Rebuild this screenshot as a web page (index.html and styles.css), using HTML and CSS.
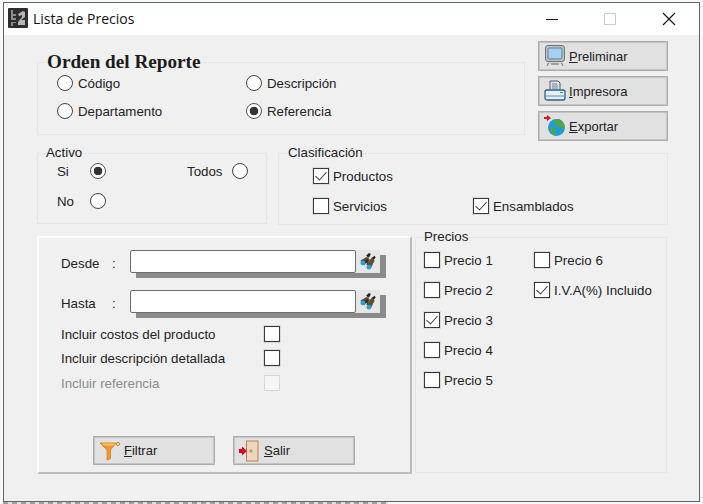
FILE: index.html
```html
<!DOCTYPE html>
<html lang="es">
<head>
    <meta charset="UTF-8">
    <meta name="viewport" content="width=device-width, initial-scale=1.0">
    <title>Lista de Precios</title>
    <link rel="stylesheet" href="styles.css">
</head>
<body>
    <div class="window">
        <div class="titlebar">
            <svg class="app-icon" viewBox="0 0 20 20">
                <rect width="20" height="20" rx="1" fill="#2e2e2e"/>
                <path d="M3 2h2v4h3v2H5v2h3v2H3zM3 14h5v1H5v3H3z" fill="#8c8c8c"/>
                <path d="M10 6l5-3 2 1v5l-4 3h4v5h-7v-3l4-5V7l-3 1z" fill="#b5b5b5"/>
            </svg>
            <span class="title">Lista de Precios</span>
            <div class="window-controls">
                <svg viewBox="0 0 46 32"><path d="M17 16.500h12" stroke="#111" stroke-width="1" fill="none"/></svg>
                <svg viewBox="0 0 46 32"><rect x="17.500" y="10.500" width="11" height="11" stroke="#ccc" fill="none"/></svg>
                <svg viewBox="0 0 46 32"><path d="M17 10l12 12M29 10L17 22" stroke="#111" stroke-width="1.100" fill="none"/></svg>
            </div>
        </div>

        <div class="content">
            <div class="row row-top">
                <fieldset class="group group-orden">
                    <legend class="legend-big">Orden del Reporte</legend>
                    <div class="orden-grid">
                        <label class="opt"><span class="radio"></span>Código</label>
                        <label class="opt"><span class="radio"></span>Descripción</label>
                        <label class="opt"><span class="radio"></span>Departamento</label>
                        <label class="opt"><span class="radio on"></span>Referencia</label>
                    </div>
                </fieldset>
                <div class="side-buttons">
                    <button class="btn" type="button">
                        <svg class="icon" viewBox="0 0 22 22">
                            <rect x="1.500" y="0.500" width="19" height="16" rx="2.500" fill="#bfc3c6" stroke="#6f7478"/>
                            <rect x="4" y="3" width="14" height="11" rx="1" fill="#a6d0f2" stroke="#5f7d96"/>
                            <path d="M3 17h16v2H3z" fill="#d4d4d4"/>
                            <path d="M4.500 18l-1.500 3M17.500 18l1.500 3M7 19h8" stroke="#6a6a6a" fill="none"/>
                        </svg>
                        <span><u>P</u>reliminar</span>
                    </button>
                    <button class="btn" type="button">
                        <svg class="icon" viewBox="0 0 22 22">
                            <path d="M6 1h8l2 2v8H6z" fill="#dfe3e7" stroke="#4f6172"/>
                            <path d="M8 4h5M8 6h6M8 8h6" stroke="#6f8296"/>
                            <rect x="1" y="10" width="20" height="10" rx="2" fill="#e6eef4" stroke="#2c5f8e" stroke-width="1.300"/>
                            <path d="M2 16h18" stroke="#5f8db8"/>
                            <path d="M16 12.500h3" stroke="#2bb35a" stroke-width="1.300"/>
                        </svg>
                        <span><u>I</u>mpresora</span>
                    </button>
                    <button class="btn" type="button">
                        <svg class="icon" viewBox="0 0 22 22">
                            <circle cx="12.500" cy="12.500" r="8.500" fill="#1f9be0"/>
                            <path d="M10 5l5-1 3 2 3 5-2 4-4-3-3-1-2-3zM5 12l5 1 2 3-1 5-3-2z" fill="#4fa44f"/>
                            <path d="M0 2h3V0l4 3-4 3V4H0z" fill="#e01020"/>
                        </svg>
                        <span><u>E</u>xportar</span>
                    </button>
                </div>
            </div>

            <div class="row row-mid">
                <fieldset class="group group-activo">
                    <legend>Activo</legend>
                    <div class="activo-grid">
                        <span>Si</span><span class="radio on"></span>
                        <span class="todos">Todos</span><span class="radio"></span>
                        <span>No</span><span class="radio"></span>
                    </div>
                </fieldset>
                <fieldset class="group group-clasif">
                    <legend>Clasificación</legend>
                    <div class="clasif-grid">
                        <label class="opt"><span class="check on"></span>Productos</label>
                        <span></span>
                        <label class="opt"><span class="check"></span>Servicios</label>
                        <label class="opt"><span class="check on"></span>Ensamblados</label>
                    </div>
                </fieldset>
            </div>

            <div class="row row-bottom">
                <div class="panel">
                    <div class="search-row">
                        <span class="search-label">Desde</span><span class="colon">:</span>
                        <div class="search-box">
                            <input class="search-input" type="text">
                            <button class="search-btn" type="button">
                                <svg viewBox="0 0 20 20"><use href="#binoculars"/></svg>
                            </button>
                        </div>
                    </div>
                    <div class="search-row">
                        <span class="search-label">Hasta</span><span class="colon">:</span>
                        <div class="search-box">
                            <input class="search-input" type="text">
                            <button class="search-btn" type="button">
                                <svg viewBox="0 0 20 20"><use href="#binoculars"/></svg>
                            </button>
                        </div>
                    </div>
                    <div class="include-list">
                        <label class="include"><span>Incluir costos del producto</span><span class="check"></span></label>
                        <label class="include"><span>Incluir descripción detallada</span><span class="check"></span></label>
                        <label class="include disabled"><span>Incluir referencia</span><span class="check"></span></label>
                    </div>
                    <div class="panel-buttons">
                        <button class="btn" type="button">
                            <svg class="icon" viewBox="0 0 22 22">
                                <path d="M1 3h16l-5.500 7v8.500l-3.500 1.500v-10z" fill="#f5962a" stroke="#d07c1e" stroke-width=".8"/>
                                <path d="M3 3.500h13l-2 2H5z" fill="#fbc06a"/>
                                <circle cx="19" cy="4" r="1.600" fill="none" stroke="#d07c1e"/>
                            </svg>
                            <span><u>F</u>iltrar</span>
                        </button>
                        <button class="btn" type="button">
                            <svg class="icon" viewBox="0 0 22 22">
                                <rect x="7.500" y="1" width="11.500" height="20" fill="#ecd6bd" stroke="#b9814f"/>
                                <path d="M10 11h4M12 9v4" stroke="#a97a50" stroke-width=".8"/>
                                <path d="M0 9h3V6.500L8 11l-5 4.500V13H0z" fill="#e2001a"/>
                            </svg>
                            <span><u>S</u>alir</span>
                        </button>
                    </div>
                </div>
                <fieldset class="group group-precios">
                    <legend>Precios</legend>
                    <div class="precios-grid">
                        <label class="opt"><span class="check"></span>Precio 1</label>
                        <label class="opt"><span class="check"></span>Precio 6</label>
                        <label class="opt"><span class="check"></span>Precio 2</label>
                        <label class="opt"><span class="check on"></span>I.V.A(%) Incluido</label>
                        <label class="opt"><span class="check on"></span>Precio 3</label>
                        <span></span>
                        <label class="opt"><span class="check"></span>Precio 4</label>
                        <span></span>
                        <label class="opt"><span class="check"></span>Precio 5</label>
                    </div>
                </fieldset>
            </div>
        </div>
    </div>
    <div class="behind"></div>

    <svg class="defs" width="0" height="0">
        <symbol id="binoculars" viewBox="0 0 20 20">
            <path d="M8 4l3-3 2 1-2 4zM14 6l3-2 1 2-3 3z" fill="#222"/>
            <path d="M2 9l7-4 3 3-6 6zM8 13l6-7 3 3-4 8z" fill="#5d4e36"/>
            <path d="M9 7l2 2-2 3-2-2z" fill="#2b2b2b"/>
            <circle cx="4.500" cy="11.500" r="2.500" fill="#25a0d8"/>
            <circle cx="11" cy="16" r="2.500" fill="#25a0d8"/>
        </symbol>
    </svg>
</body>
</html>
```

FILE: styles.css
```css
html, body {
    height: 100%;
}

body {
    margin: 0;
    padding: 2px 0 0 3px;
    box-sizing: border-box;
    overflow: hidden;
    background-color: #f7f8f8;
    font-family: "Liberation Sans", Arial, sans-serif;
    font-size: 13.3px;
    color: #222;
}

.window {
    width: 697px;
    height: 500px;
    box-sizing: border-box;
    border: 1px solid #5f6468;
    background-color: #f0f0f0;
}

.behind {
    width: 385px;
    height: 2px;
    background: repeating-linear-gradient(90deg, #9aa1a5 0 5px, #dfe2e4 5px 9px);
}

.titlebar {
    height: 32px;
    display: flex;
    align-items: center;
    background-color: #fff;
    padding-left: 4px;
}

.app-icon {
    width: 20px;
    height: 20px;
    margin: 0 5px 2px 0;
}

.title {
    font-family: "Open Sans", sans-serif;
    font-size: 14px;
    color: #111;
    margin-bottom: 2px;
}

.window-controls {
    margin-left: auto;
    display: flex;
    margin-right: 7px;
}

.window-controls svg {
    width: 46px;
    height: 32px;
    margin-left: 12px;
}

.window-controls svg:last-child {
    margin-left: 13px;
}

.content {
    padding: 6px 0 0 33px;
    display: flex;
    flex-direction: column;
    gap: 5px;
}

.row {
    display: flex;
    align-items: flex-start;
}

.group {
    margin: 0;
    min-width: 0;
    box-sizing: border-box;
    border: 1px solid #e6e6e6;
    padding: 0 0 0 9px;
}

.group legend {
    padding: 0;
    line-height: 16px;
    font-size: 13.3px;
}

.group .legend-big {
    font-family: "Liberation Serif", serif;
    font-weight: bold;
    font-size: 19.2px;
    line-height: 20px;
    color: #1b1b1b;
}

.opt {
    display: flex;
    align-items: center;
    gap: 4px;
    white-space: nowrap;
}

.radio {
    flex: none;
    width: 16px;
    height: 16px;
    box-sizing: border-box;
    border: 1px solid #444;
    border-radius: 50%;
    background-color: #fff;
    display: inline-block;
}

.radio.on {
    border-color: #555;
    background: radial-gradient(circle, #333 0 4px, #fff 4.600px);
}

.check {
    flex: none;
    width: 16px;
    height: 16px;
    box-sizing: border-box;
    border: 1px solid #3a3a3a;
    box-shadow: 0 0 0 1px #dcdcdc;
    background-color: #fff;
    display: inline-block;
    position: relative;
}

.check.on::after {
    content: "";
    position: absolute;
    left: 4px;
    top: 0;
    width: 5px;
    height: 10px;
    border: solid #444;
    border-width: 0 1px 1px 0;
    transform: rotate(42deg);
}

.row-top {
    height: 99px;
    gap: 13px;
}

.group-orden {
    width: 488px;
    margin-top: 11px;
    padding: 0 0 12px 9px;
}

.orden-grid {
    display: grid;
    grid-template-columns: 189px 1fr;
    grid-auto-rows: 22px;
    row-gap: 6px;
    margin-left: 10px;
}

.orden-grid .opt {
    gap: 5px;
}

.side-buttons {
    display: flex;
    flex-direction: column;
    gap: 5px;
    width: 130px;
}

.btn {
    height: 30px;
    width: 100%;
    display: flex;
    align-items: center;
    gap: 3px;
    padding: 0 0 0 5px;
    box-sizing: border-box;
    border: 1px solid #adadad;
    box-shadow: inset 0 0 0 1px #c4c4c4;
    background-color: #e1e1e1;
    font-family: "Liberation Sans", Arial, sans-serif;
    font-size: 13px;
    color: #222;
}

.icon {
    flex: none;
    width: 22px;
    height: 22px;
}

.row-mid {
    height: 79px;
    gap: 11px;
}

.group-activo {
    width: 230px;
    padding: 0 0 12px 8px;
}

.activo-grid {
    display: grid;
    grid-template-columns: 33px 16px 126px 16px;
    grid-auto-rows: 20px;
    row-gap: 10px;
    margin-left: 11px;
    align-items: center;
}

.activo-grid .radio {
    justify-self: start;
}

.activo-grid .todos {
    margin-left: 81px;
}

.group-clasif {
    width: 390px;
    padding: 5px 0 8px 9px;
}

.clasif-grid {
    display: grid;
    grid-template-columns: 160px 1fr;
    grid-auto-rows: 20px;
    row-gap: 10px;
    margin-left: 25px;
}

.row-bottom {
    gap: 3px;
}

.panel {
    width: 375px;
    height: 238px;
    margin-top: 7px;
    box-sizing: border-box;
    border: 2px solid;
    border-color: #fcfcfc #bdbdbd #bdbdbd #fcfcfc;
    padding: 12px 0 0 22px;
    display: flex;
    flex-direction: column;
}

.search-row {
    display: flex;
    align-items: center;
    height: 23px;
    margin-bottom: 17px;
}

.search-label {
    width: 51px;
    padding-top: 4px;
}

.colon {
    width: 18px;
    padding-top: 4px;
}

.search-box {
    display: flex;
    align-items: stretch;
    height: 23px;
    box-shadow: 6px 5px 0 0 #8a8a8a;
}

.search-input {
    width: 226px;
    height: 23px;
    margin: 0;
    padding: 0;
    box-sizing: border-box;
    border: 1px solid #6d6d6d;
    border-radius: 2px;
    background-color: #fff;
}

.search-btn {
    width: 24px;
    height: 23px;
    padding: 1px;
    border: 1px solid #e4e4e4;
    background-color: #e6e6e6;
}

.search-btn svg {
    width: 20px;
    height: 19px;
    display: block;
}

.include-list {
    display: flex;
    flex-direction: column;
    margin-top: -4px;
}

.include {
    display: flex;
    align-items: center;
    justify-content: space-between;
    width: 219px;
    height: 16px;
    margin-bottom: 8px;
}

.include.disabled {
    color: #8c8c8c;
    margin-top: 1px;
}

.include.disabled .check {
    border-color: #d6d6d6;
    box-shadow: none;
    background-color: #f6f6f6;
}

.panel-buttons {
    display: flex;
    gap: 18px;
    margin-top: 37px;
    margin-left: 32px;
}

.panel-buttons .btn {
    width: 122px;
    height: 29px;
}

.group-precios {
    width: 252px;
    height: 244px;
    padding: 5px 0 0 8px;
}

.precios-grid {
    display: grid;
    grid-template-columns: 110px 1fr;
    grid-auto-rows: 20px;
    row-gap: 10px;
}

.defs {
    position: absolute;
}
```
